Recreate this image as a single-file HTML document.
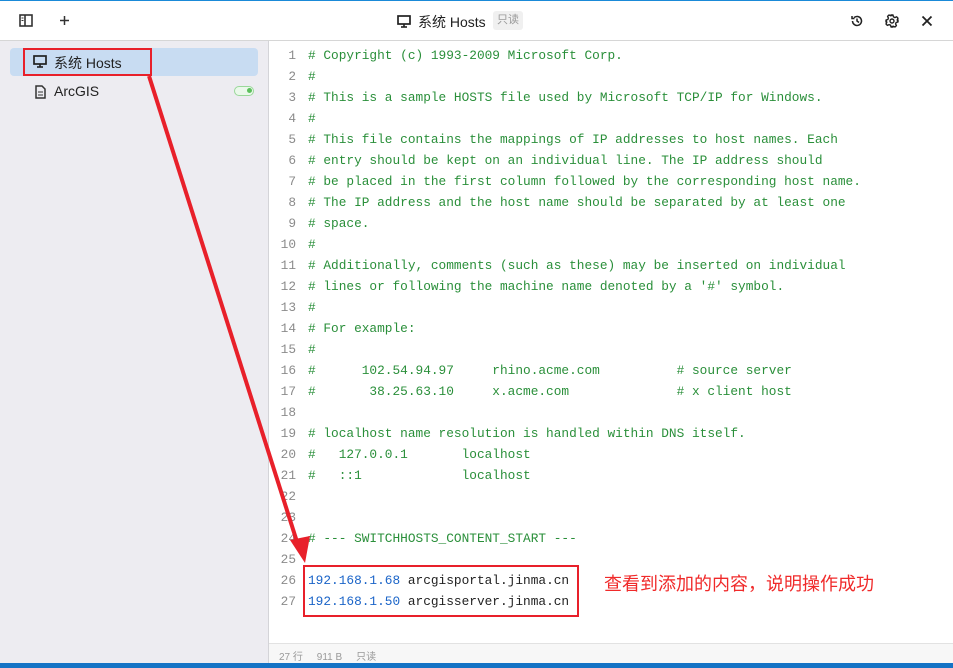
<!DOCTYPE html>
<html><head><meta charset="utf-8"><style>
*{margin:0;padding:0;box-sizing:border-box}
body{width:953px;height:668px;overflow:hidden;background:#fff;font-family:"Liberation Sans","Noto Sans CJK SC",sans-serif;position:relative}
.top{position:absolute;left:0;top:0;width:953px;height:41px;border-top:1px solid #1a8ad8;border-bottom:1px solid #d6d6d6;background:#fff}
.side{position:absolute;left:0;top:41px;width:269px;height:622px;background:#edecf1;border-right:1px solid #d4d4d8}
.sel{position:absolute;left:10px;top:7px;width:248px;height:28px;background:#c8dcf2;border-radius:4px}
.ln{position:absolute;left:270px;width:26px;text-align:right;font:12.8px "Liberation Mono",monospace;color:#8b8b8b}
.tx{position:absolute;left:308px;font:12.8px "Liberation Mono",monospace;color:#2a8f3a;white-space:pre}
.status{position:absolute;left:269px;top:643px;width:684px;height:20px;border-top:1px solid #e2e2e2;background:#f7f7f7;font:10px "Liberation Sans","Noto Sans CJK SC",sans-serif;color:#999;padding:4px 10px}
.bb{position:absolute;left:0;top:663px;width:953px;height:5px;background:#1473c5}
</style></head><body>
<div class="top">
<svg style="position:absolute;left:19px;top:13px" width="14" height="13" viewBox="0 0 14 13"><rect x="1" y="1" width="12" height="11" fill="none" stroke="#333" stroke-width="1.6"/><line x1="6" y1="1" x2="6" y2="12" stroke="#333" stroke-width="1.6"/><line x1="2.5" y1="4" x2="4.5" y2="4" stroke="#333"/><line x1="2.5" y1="6.5" x2="4.5" y2="6.5" stroke="#333"/></svg>
<svg style="position:absolute;left:59px;top:14px" width="11" height="11" viewBox="0 0 11 11"><path d="M5.5 1v9M1 5.5h9" stroke="#333" stroke-width="1.5"/></svg>
<svg style="position:absolute;left:397px;top:14px" width="14" height="13" viewBox="0 0 14 13"><rect x="1" y="1" width="12" height="8" fill="none" stroke="#222" stroke-width="1.7"/><line x1="7" y1="9" x2="7" y2="12" stroke="#222" stroke-width="1.6"/><line x1="4" y1="12" x2="10" y2="12" stroke="#222" stroke-width="1.6"/></svg>
<div style="position:absolute;left:418px;top:11px;font-size:14px;color:#222">系统 Hosts</div>
<div style="position:absolute;left:493px;top:10px;width:30px;height:19px;background:#f0f0f0;border-radius:3px;font-size:11px;color:#999;text-align:center;line-height:19px">只读</div>
<svg style="position:absolute;left:850px;top:13px" width="14" height="14" viewBox="0 0 14 14"><path d="M2.5 7a4.5 4.5 0 1 0 1.5-3.4M2 2v2.5h2.5M7 4.5V7l2 1.5" fill="none" stroke="#222" stroke-width="1.5"/></svg>
<svg style="position:absolute;left:885px;top:13px" width="14" height="14" viewBox="0 0 14 14"><path d="M6 1h2l.4 1.8 1.5.8 1.7-.8 1.4 1.4-.8 1.7.6 1.5L13 8v-2 2l-1.8.4-.6 1.5.8 1.7-1.4 1.4-1.7-.8-1.5.6L8 13H6l-.4-1.8-1.5-.6-1.7.8L1 10l.8-1.7L1.2 6.8 1 6V8 6l1.8-.4.6-1.5L2.6 2.4 4 1l1.7.8 1.5-.6z" fill="none" stroke="#222" stroke-width="1.4" stroke-linejoin="round"/><circle cx="7" cy="7" r="2" fill="none" stroke="#222" stroke-width="1.4"/></svg>
<svg style="position:absolute;left:921px;top:14px" width="12" height="12" viewBox="0 0 12 12"><path d="M1.5 1.5l9 9M10.5 1.5l-9 9" stroke="#222" stroke-width="1.8"/></svg>
</div>
<div class="side">
<div class="sel"></div>
<svg style="position:absolute;left:33px;top:14px" width="14" height="13" viewBox="0 0 14 13"><rect x="1" y="1" width="12" height="8" fill="none" stroke="#222" stroke-width="1.7"/><line x1="7" y1="9" x2="7" y2="12" stroke="#222" stroke-width="1.6"/><line x1="4" y1="12" x2="10" y2="12" stroke="#222" stroke-width="1.6"/></svg>
<div style="position:absolute;left:54px;top:12px;font-size:14px;color:#222">系统 Hosts</div>
<svg style="position:absolute;left:35px;top:44px" width="11" height="14" viewBox="0 0 11 14"><path d="M1 1h6l3 3v9H1z" fill="none" stroke="#333" stroke-width="1.5"/><line x1="3" y1="7" x2="8" y2="7" stroke="#333"/><line x1="3" y1="10" x2="8" y2="10" stroke="#333"/></svg>
<div style="position:absolute;left:54px;top:42px;font-size:14px;color:#222">ArcGIS</div>
<div style="position:absolute;left:234px;top:45px;width:20px;height:10px;border:1.5px solid #9ad89a;border-radius:6px;background:#eaf8ea"><div style="position:absolute;right:1px;top:1px;width:5px;height:5px;border-radius:50%;background:#5cc05c"></div></div>
</div>
<div id="lines"></div>
<script>
var L=["# Copyright (c) 1993-2009 Microsoft Corp.","#","# This is a sample HOSTS file used by Microsoft TCP/IP for Windows.","#","# This file contains the mappings of IP addresses to host names. Each","# entry should be kept on an individual line. The IP address should","# be placed in the first column followed by the corresponding host name.","# The IP address and the host name should be separated by at least one","# space.","#","# Additionally, comments (such as these) may be inserted on individual","# lines or following the machine name denoted by a '#' symbol.","#","# For example:","#","#      102.54.94.97     rhino.acme.com          # source server","#       38.25.63.10     x.acme.com              # x client host","","# localhost name resolution is handled within DNS itself.","#\t127.0.0.1       localhost","#\t::1             localhost","","","# --- SWITCHHOSTS_CONTENT_START ---","",
'<span style="color:#1a64c8">192.168.1.68</span><span style="color:#222"> arcgisportal.jinma.cn</span>',
'<span style="color:#1a64c8">192.168.1.50</span><span style="color:#222"> arcgisserver.jinma.cn</span>'];
var h="";
for(var i=0;i<L.length;i++){var y=48+i*21;var t=L[i].replace("#\t","#   ");
h+='<div class="ln" style="top:'+y+'px">'+(i+1)+'</div><div class="tx" style="top:'+y+'px">'+t+'</div>';}
document.getElementById("lines").innerHTML=h;
</script>
<div class="status">27 行 &nbsp;&nbsp;&nbsp; 911 B &nbsp;&nbsp;&nbsp; 只读</div>
<div class="bb"></div>
<div style="position:absolute;left:23px;top:48px;width:129px;height:28px;border:2px solid #e8202a"></div>
<div style="position:absolute;left:303px;top:565px;width:276px;height:52px;border:2px solid #e8202a"></div>
<div style="position:absolute;left:604px;top:570px;font-size:18px;color:#f02a2a;font-family:'Noto Sans CJK SC',sans-serif">查看到添加的内容，说明操作成功</div>
<svg style="position:absolute;left:0;top:0" width="953" height="668"><line x1="149" y1="76" x2="298" y2="545" stroke="#e8202a" stroke-width="4"/><polygon points="305,563 290,540 310,536" fill="#e8202a"/></svg>
</body></html>
